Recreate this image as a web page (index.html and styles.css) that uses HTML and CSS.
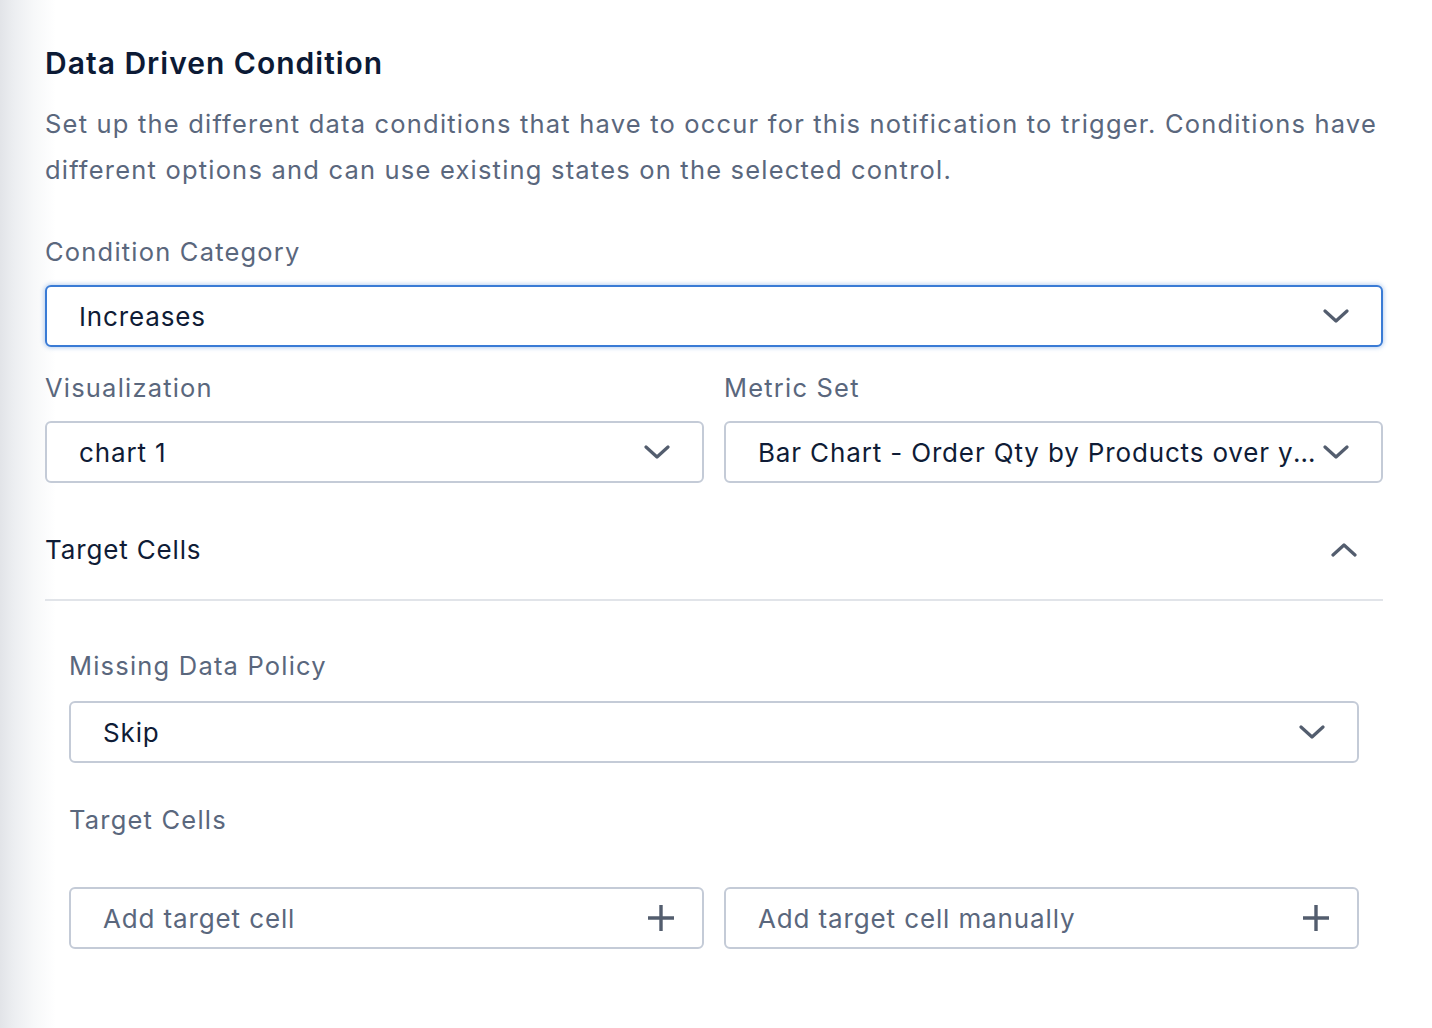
FILE: index.html
```html
<!DOCTYPE html>
<html>
<head>
<meta charset="utf-8">
<link rel="stylesheet" href="styles.css">
</head>
<body>
<div class="panel">
  <h1 class="title">Data Driven Condition</h1>
  <p class="desc">Set up the different data conditions that have to occur for this notification to trigger. Conditions have different options and can use existing states on the selected control.</p>

  <div class="label l-cat">Condition Category</div>
  <div class="select focused">
    <span class="value">Increases</span>
    <svg class="chev" width="26" height="16" viewBox="0 0 26 16"><path d="M2 3 L13 13 L24 3" fill="none" stroke="#535d6e" stroke-width="3.2" stroke-linecap="round" stroke-linejoin="round"/></svg>
  </div>

  <div class="row two">
    <div class="col">
      <div class="label l-row">Visualization</div>
      <div class="select">
        <span class="value">chart 1</span>
        <svg class="chev" width="26" height="16" viewBox="0 0 26 16"><path d="M2 3 L13 13 L24 3" fill="none" stroke="#535d6e" stroke-width="3.2" stroke-linecap="round" stroke-linejoin="round"/></svg>
      </div>
    </div>
    <div class="col">
      <div class="label l-row">Metric Set</div>
      <div class="select tight">
        <span class="value">Bar Chart - Order Qty by Products over years</span>
        <svg class="chev" width="26" height="16" viewBox="0 0 26 16"><path d="M2 3 L13 13 L24 3" fill="none" stroke="#535d6e" stroke-width="3.2" stroke-linecap="round" stroke-linejoin="round"/></svg>
      </div>
    </div>
  </div>

  <div class="section-head">
    <span class="section-title">Target Cells</span>
    <svg class="chev-up" width="26" height="16" viewBox="0 0 26 16"><path d="M2 13 L13 3 L24 13" fill="none" stroke="#535d6e" stroke-width="3.2" stroke-linecap="round" stroke-linejoin="round"/></svg>
  </div>

  <div class="section-body">
    <div class="label l-missing">Missing Data Policy</div>
    <div class="select">
      <span class="value">Skip</span>
      <svg class="chev" width="26" height="16" viewBox="0 0 26 16"><path d="M2 3 L13 13 L24 3" fill="none" stroke="#535d6e" stroke-width="3.2" stroke-linecap="round" stroke-linejoin="round"/></svg>
    </div>

    <div class="label l-target">Target Cells</div>
    <div class="row two buttons">
      <div class="add-btn">
        <span class="placeholder">Add target cell</span>
        <svg class="plus" width="28" height="28" viewBox="0 0 28 28"><path d="M14 1 V27 M1 14 H27" fill="none" stroke="#535d6e" stroke-width="3.4"/></svg>
      </div>
      <div class="add-btn">
        <span class="placeholder">Add target cell manually</span>
        <svg class="plus" width="28" height="28" viewBox="0 0 28 28"><path d="M14 1 V27 M1 14 H27" fill="none" stroke="#535d6e" stroke-width="3.4"/></svg>
      </div>
    </div>
  </div>
</div>
</body>
</html>
```

FILE: styles.css
```css
html, body {
  margin: 0;
  padding: 0;
}
body {
  width: 1432px;
  height: 1028px;
  overflow: hidden;
  font-family: Inter, "Noto Sans", "Liberation Sans", sans-serif;
  background: linear-gradient(to right, #e2e4e8 0px, #eceef1 14px, #f7f8f9 34px, #ffffff 56px);
}
.panel {
  box-sizing: border-box;
  width: 1383px;
  padding: 45px 0 0 45px;
}
.title {
  margin: 0;
  font-size: 30px;
  line-height: 36px;
  font-weight: 600;
  color: #0c1a35;
  letter-spacing: 1px;
}
.desc {
  margin: 20px 0 0 0;
  font-size: 25.5px;
  line-height: 46px;
  color: #5a677d;
  letter-spacing: 1.2px;
}
.label {
  font-size: 25.5px;
  line-height: 32px;
  color: #5a677d;
  margin-bottom: 17px;
  letter-spacing: 1.2px;
}
.l-cat { margin-top: 43px; }
.l-row { margin-top: 25px; }
.l-missing { margin-top: 49px; margin-bottom: 19px; }
.l-target { margin-top: 41px; margin-bottom: 51px; }

.select, .add-btn {
  box-sizing: border-box;
  height: 62px;
  border: 2px solid #c4cbd7;
  border-radius: 6px;
  background: #fff;
  display: flex;
  align-items: center;
  justify-content: space-between;
  padding: 0 32px 0 32px;
}
.select.focused {
  border-color: #3a7bd5;
  box-shadow: 0 0 4px 1px rgba(58, 123, 213, 0.35);
}
.value {
  font-size: 26px;
  color: #0f1c36;
  white-space: nowrap;
  overflow: hidden;
  text-overflow: ellipsis;
  min-width: 0;
  flex: 1;
  letter-spacing: 0.85px;
}
.chev, .chev-up, .plus {
  flex: none;
}
.select.tight .value {
  padding-right: 2px;
}
.row.two {
  display: grid;
  grid-template-columns: minmax(0, 1fr) minmax(0, 1fr);
  column-gap: 20px;
}
.col {
  min-width: 0;
}
.section-head {
  margin-top: 51px;
  height: 32px;
  display: flex;
  align-items: center;
  justify-content: space-between;
  padding-right: 26px;
  padding-bottom: 33px;
  border-bottom: 2px solid #e1e4e9;
}
.section-title {
  font-size: 26px;
  line-height: 32px;
  color: #0f1c36;
  letter-spacing: 0.85px;
}
.section-body {
  padding: 0 24px;
}
.add-btn {
  padding-right: 27px;
}
.placeholder {
  font-size: 26px;
  color: #5a677d;
  white-space: nowrap;
  letter-spacing: 0.87px;
}
```
